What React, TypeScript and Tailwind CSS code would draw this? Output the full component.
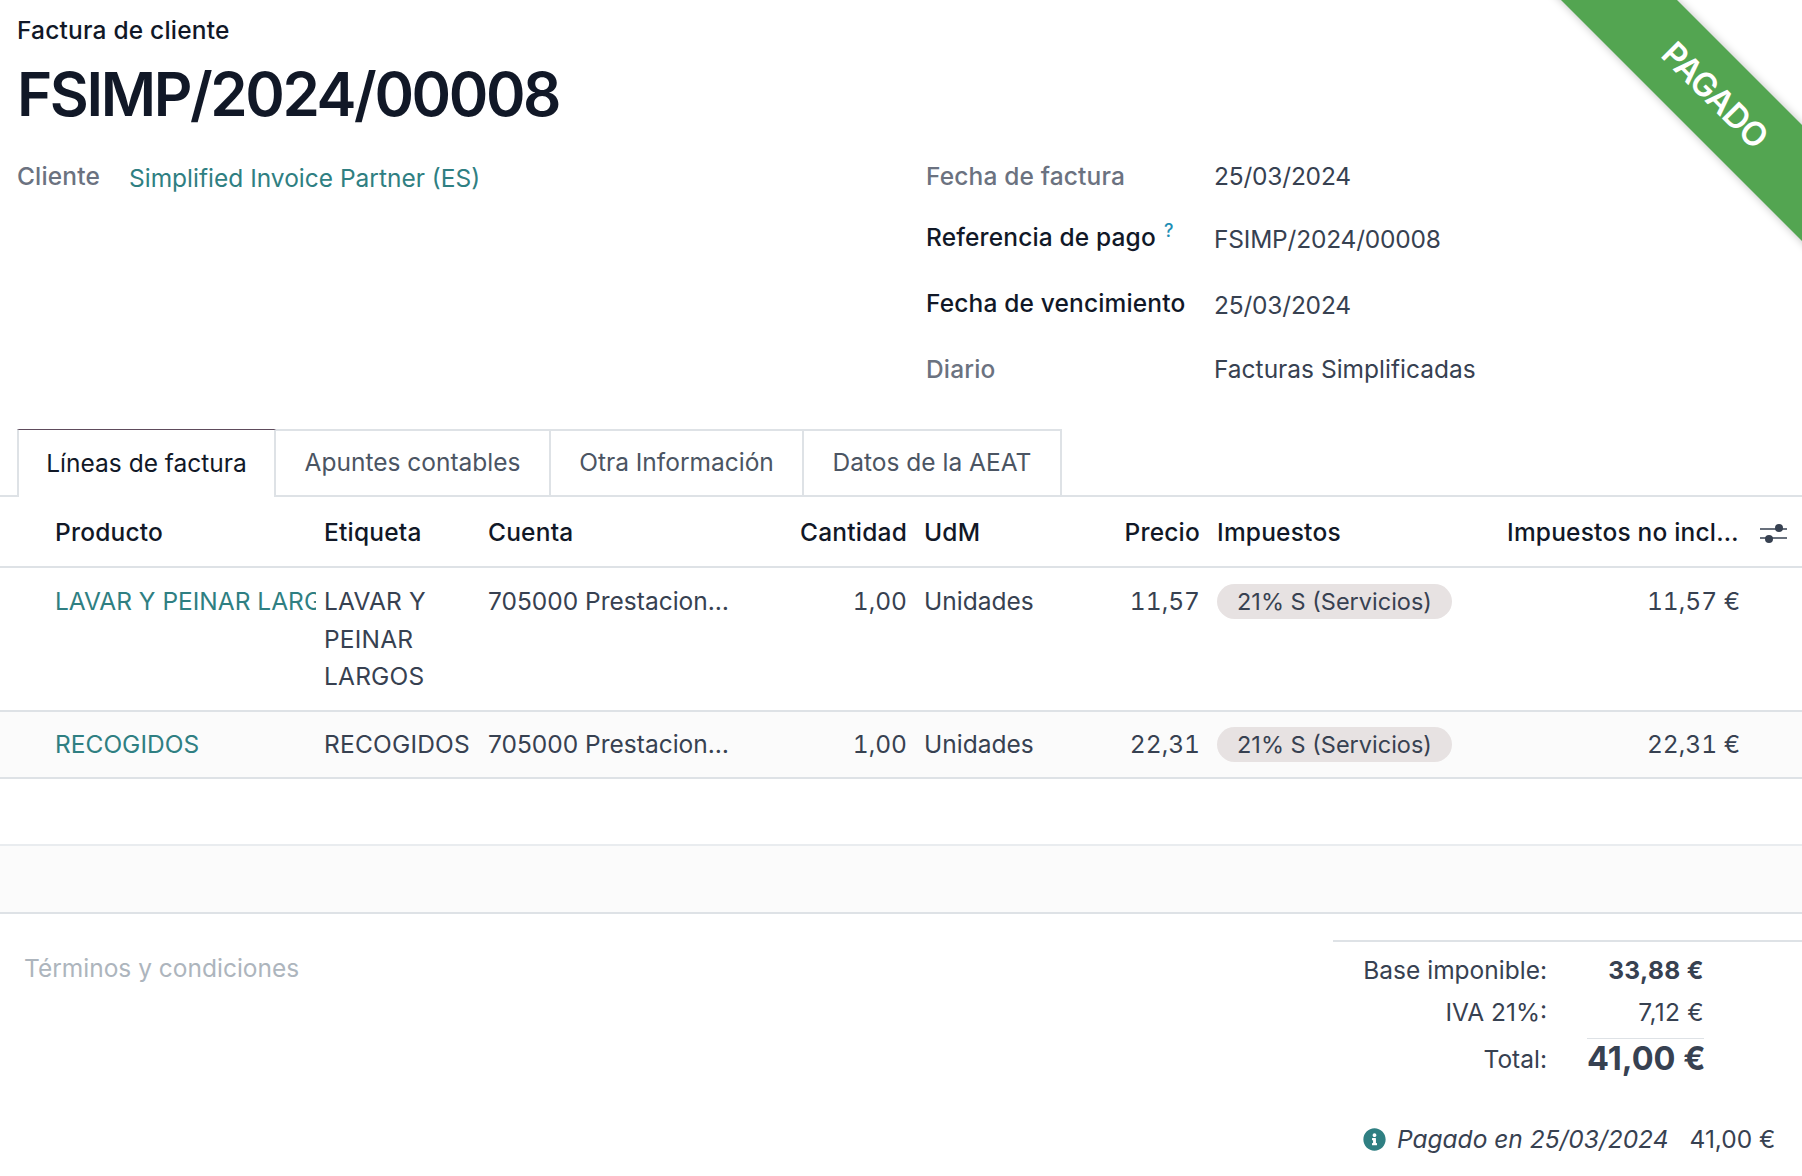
import { FaInfoCircle } from 'react-icons/fa';

const lines = [
  { product: 'LAVAR Y PEINAR LARGOS', label: 'LAVAR Y PEINAR LARGOS', price: '11,57', subtotal: '11,57 €', bg: 'bg-white', h: 'h-[142px]', pad: 'pt-[15px] pb-[14px]' },
  { product: 'RECOGIDOS', label: 'RECOGIDOS', price: '22,31', subtotal: '22,31 €', bg: 'bg-[#fbfbfb]', h: 'h-[67px]', pad: 'pt-[14px] pb-[13px]' },
];

const tabs = ['Apuntes contables', 'Otra Información', 'Datos de la AEAT'];
const tabWidths = ['w-[275px]', 'w-[253px]', 'w-[258px]'];

function FormRow({ label, value, strong, help, h, tight }: { label: string; value: string; strong?: boolean; help?: boolean; h: string; tight?: boolean }) {
  return (
    <div className={`flex ${h}`}>
      <div className={`w-[288px] shrink-0 font-medium tracking-[0.15px] ${strong ? 'text-[#111827]' : 'text-[#6b7280]'}`}>
        {label}
        {help && <sup className="ml-2 text-[18px] font-medium text-[#1f8fb5]">?</sup>}
      </div>
      <div className={`text-[#374151] ${tight ? 'tracking-[-0.2px]' : ''} ${strong ? 'pt-0.5' : ''}`}>{value}</div>
    </div>
  );
}

export default function App() {
  return (
    <div className="relative w-[1802px] h-[1176px] overflow-hidden bg-white text-[24.5px] leading-[37.6px] text-[#374151] font-['Inter',sans-serif]">
      {/* ribbon */}
      <div className="absolute top-0 right-0 w-[260px] h-[260px] overflow-hidden">
        <div className="absolute left-[-29px] top-[53px] w-[400px] h-[82px] rotate-45 bg-[#53a551] shadow-[0_0_8px_rgba(0,0,0,0.25)] flex items-center justify-center pl-[4px] text-white text-[33px] font-semibold tracking-tight">
          PAGADO
        </div>
      </div>

      <div className="h-[429px] pl-[17px] pt-[12px]">
        <div className="font-medium tracking-[0.2px] text-[#111827]">Factura de cliente</div>
        <h1 className="mt-[8px] text-[60px] leading-[72px] font-semibold tracking-[-2.4px] text-[#111827]">FSIMP/2024/00008</h1>
        <div className="flex mt-[28px]">
          <div className="w-[909px] flex shrink-0">
            <div className="w-[112px] font-medium tracking-[0.15px] text-[#6b7280]">Cliente</div>
            <div className="pt-0.5 text-[#2f7f82]">Simplified Invoice Partner (ES)</div>
          </div>
          <div>
            <FormRow label="Fecha de factura" value="25/03/2024" tight h="h-[61px]" />
            <FormRow label="Referencia de pago" value="FSIMP/2024/00008" tight strong help h="h-[66px]" />
            <FormRow label="Fecha de vencimiento" value="25/03/2024" tight strong h="h-[66px]" />
            <FormRow label="Diario" value="Facturas Simplificadas" h="h-[40px]" />
          </div>
        </div>
      </div>

      {/* tabs */}
      <div className="flex h-[68px] pl-[17px] border-b-2 border-[#dee2e6]">
        <div className="w-[259px] h-[68px] bg-white border-x-2 border-t border-x-[#dee2e6] border-t-[#5e4b5c] flex items-center justify-center text-[#111827]">
          Líneas de factura
        </div>
        {tabs.map((tab, i) => (
          <div key={tab} className={`${tabWidths[i]} h-[66px] border-t-2 border-r-2 border-[#dee2e6] flex items-center justify-center text-[#4b5563]`}>
            {tab}
          </div>
        ))}
      </div>

      <table className="w-[1802px] table-fixed border-collapse">
        <colgroup>
          <col className="w-[316px]" />
          <col className="w-[164px]" />
          <col className="w-[260px]" />
          <col className="w-[176px]" />
          <col className="w-[184px]" />
          <col className="w-[109px]" />
          <col className="w-[290px]" />
          <col className="w-[249px]" />
          <col className="w-[54px]" />
        </colgroup>
        <thead>
          <tr className="h-[70px] border-b-2 border-[#dee2e6] text-[#111827] tracking-[0.2px]">
            <th className="pl-[55px] pr-2 pt-0.5 text-left font-medium">Producto</th>
            <th className="px-2 pt-0.5 text-left font-medium">Etiqueta</th>
            <th className="px-2 pt-0.5 text-left font-medium">Cuenta</th>
            <th className="pl-2 pr-[9px] pt-0.5 text-right font-medium">Cantidad</th>
            <th className="px-2 pt-0.5 text-left font-medium">UdM</th>
            <th className="pl-2 pr-[9px] pt-0.5 text-right font-medium">Precio</th>
            <th className="px-2 pt-0.5 text-left font-medium">Impuestos</th>
            <th className="px-2 pt-0.5 text-right font-medium truncate">Impuestos no incluidos</th>
            <th className="pl-[12px] pt-0.5">
              <svg width="28" height="24" viewBox="0 0 28 24" fill="none" className="text-[#374151]">
                <path d="M0 8h27M0 17h27" stroke="currentColor" strokeWidth="1.5" />
                <circle cx="19" cy="7" r="4" fill="currentColor" />
                <circle cx="9" cy="18" r="4" fill="currentColor" />
              </svg>
            </th>
          </tr>
        </thead>
        <tbody>
          {lines.map((l) => (
            <tr key={l.product} className={`${l.h} ${l.bg} border-b-2 border-[#dee2e6] align-top`}>
              <td className={`pl-[55px] pr-0 ${l.pad}`}>
                <div className="overflow-hidden whitespace-nowrap text-[#2f7f82]">{l.product}</div>
              </td>
              <td className={`px-2 tracking-[0.2px] ${l.pad}`}>{l.label}</td>
              <td className={`px-2 truncate ${l.pad}`}>705000 Prestacion de servicios</td>
              <td className={`pl-2 pr-[9px] text-right tabular-nums ${l.pad}`}>1,00</td>
              <td className={`px-2 ${l.pad}`}>Unidades</td>
              <td className={`pl-2 pr-[9px] text-right tabular-nums ${l.pad}`}>{l.price}</td>
              <td className={`px-2 ${l.pad}`}>
                <span className="inline-block rounded-full bg-[#e7e2e2] px-5 text-[23.5px] leading-[35px] text-[#374151] whitespace-nowrap">21% S (Servicios)</span>
              </td>
              <td className={`px-2 text-right tabular-nums ${l.pad}`}>{l.subtotal}</td>
              <td />
            </tr>
          ))}
          <tr className="h-[67px] border-b-2 border-[#e9ecef]">
            <td colSpan={9} />
          </tr>
          <tr className="h-[68px] bg-[#fbfbfb] border-b-2 border-[#dee2e6]">
            <td colSpan={9} />
          </tr>
        </tbody>
      </table>

      {/* totals */}
      <div className="flex justify-between pt-[26px]">
        <div className="pl-[24px] pt-[10px] text-[#adb5bd]">Términos y condiciones</div>
        <div className="w-[469px] border-t-2 border-[#dee2e6] pt-[10px]">
          <div className="flex h-[42px]">
            <div className="w-[214px] text-right">Base imponible:</div>
            <div className="w-[157px] text-right font-bold tracking-[0.4px]">33,88 €</div>
          </div>
          <div className="flex h-[44px]">
            <div className="w-[214px] text-right">IVA 21%:</div>
            <div className="w-[157px] text-right tracking-[0.3px]">7,12 €</div>
          </div>
          <div className="flex h-[42px]">
            <div className="w-[214px] pt-[3px] text-right">Total:</div>
            <div className="ml-[40px] w-[117px] border-t border-[#dee2e6] text-right text-[32.5px] font-bold leading-[40px] whitespace-nowrap">41,00 €</div>
          </div>
          <div className="mt-[41px] ml-[30px] flex items-center">
            <FaInfoCircle className="w-[23px] h-[23px] text-[#2f7f82]" />
            <span className="ml-[11px] italic">Pagado en 25/03/2024</span>
            <span className="ml-[21px]">41,00 €</span>
          </div>
        </div>
      </div>
    </div>
  );
}
